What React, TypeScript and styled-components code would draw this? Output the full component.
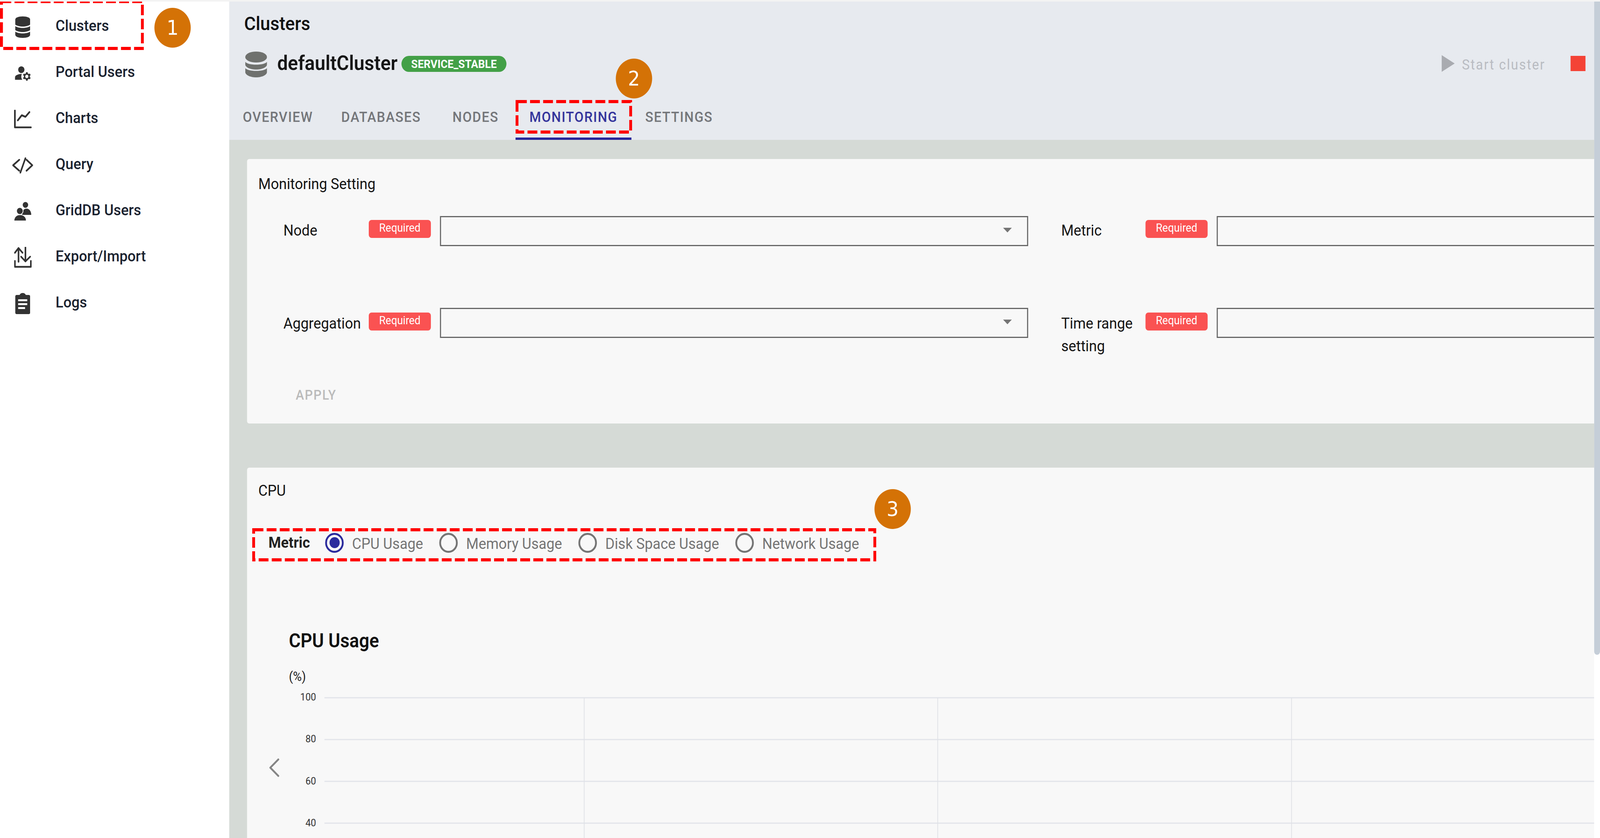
import React from "react";
import styled, { createGlobalStyle } from "styled-components";
import { MdManageAccounts } from "react-icons/md";

const DESIGN_WIDTH = 4404;

const GlobalStyle = createGlobalStyle`
  html, body { margin: 0; padding: 0; background: #fff; overflow: hidden; }
  body { font-family: Roboto, "Liberation Sans", sans-serif; }
  * { box-sizing: border-box; }
`;

const Viewport = styled.div`
  width: 100vw;
  height: 100vh;
  overflow: hidden;
`;

const Shell = styled.div`
  position: relative;
  width: ${DESIGN_WIDTH}px;
  height: 2145px;
  display: flex;
  overflow: hidden;
  border-top: 4px solid #f3f3f3;
  background: #fff;
  transform-origin: 0 0;
`;

const Sidebar = styled.nav`
  width: 631px;
  flex-shrink: 0;
  padding-top: 2px;
  background: #fff;
`;

const NavRow = styled.div`
  height: 118px;
  display: flex;
  align-items: center;
  color: #1b2330;
  font-size: 39.5px;
  font-weight: 500;
`;

const NavIcon = styled.span`
  width: 125px;
  margin-right: 28px;
  padding-top: 8px;
  display: flex;
  justify-content: center;
  align-items: center;
  color: #333;
`;

const Main = styled.div`
  width: 3757px;
  flex-shrink: 0;
  display: flex;
  flex-direction: column;
  overflow: hidden;
  background: #d5dad6;
`;

const Header = styled.header`
  height: 354px;
  flex-shrink: 0;
  background: #e7eaef;
  display: flex;
  flex-direction: column;
`;

const PageTitle = styled.h1`
  height: 112px;
  margin: 0;
  padding-left: 41px;
  display: flex;
  align-items: center;
  font-size: 49px;
  font-weight: 500;
  color: #111;
`;

const ClusterRow = styled.div`
  height: 84px;
  padding-left: 44px;
  display: flex;
  align-items: center;
  white-space: nowrap;
`;

const ClusterGlyph = styled.span`
  display: flex;
  margin-top: 14px;
`;

const ClusterName = styled.span`
  width: 342px;
  margin-left: 28px;
  padding-top: 7px;
  font-size: 52px;
  font-weight: 600;
  color: #161616;
`;

const StatusBadge = styled.span`
  width: 289px;
  height: 41px;
  margin-top: 11px;
  border-radius: 21px;
  background: #43a047;
  color: #fff;
  font-size: 29.4px;
  font-weight: 700;
  display: flex;
  align-items: center;
  justify-content: center;
`;

const Actions = styled.div`
  margin-left: auto;
  width: 420px;
  flex-shrink: 0;
  padding-top: 8px;
  display: flex;
  align-items: center;
`;

const ActionLabel = styled.span<{ $disabled?: boolean }>`
  font-size: 36px;
  letter-spacing: 2.6px;
  padding-top: 8px;
  color: ${(p) => (p.$disabled ? "#b9bcc2" : "#111")};
`;

const PlayIcon = styled.svg`
  width: 36px;
  height: 43px;
  margin-right: 20px;
  flex-shrink: 0;
`;

const StopSquare = styled.span`
  width: 41px;
  height: 39px;
  margin: 0 24px 0 70px;
  flex-shrink: 0;
  background: #f44336;
`;

const TabBar = styled.div`
  margin-top: 42px;
  display: flex;
`;

const Tab = styled.div<{ $active?: boolean; $width: number }>`
  width: ${(p) => p.$width}px;
  height: 116px;
  padding-top: 4px;
  display: flex;
  align-items: center;
  justify-content: center;
  border-bottom: 6px solid ${(p) => (p.$active ? "#26269a" : "transparent")};
  font-size: 36.5px;
  font-weight: 500;
  letter-spacing: 1.9px;
  color: ${(p) => (p.$active ? "#34349c" : "#74767a")};
`;

const Body = styled.div`
  flex: 1;
  min-height: 0;
  padding: 49px 0 0 49px;
  display: flex;
  flex-direction: column;
  gap: 113px;
`;

const Card = styled.section<{ $fixed?: boolean }>`
  flex-shrink: 0;
  background: #f8f8f8;
  border-radius: 6px 0 0 6px;
  overflow: hidden;
  height: ${(p) => (p.$fixed ? "677px" : "auto")};
`;

const CardTitle = styled.h2<{ $top: number }>`
  margin: 0;
  padding-top: ${(p) => p.$top}px;
  padding-left: 31px;
  line-height: 58px;
  font-size: 39.3px;
  font-weight: 400;
  color: #141414;
`;

const FormGrid = styled.div`
  margin-top: 53px;
  padding-left: 100px;
  display: grid;
  grid-template-columns: 2050px 1fr;
  grid-template-rows: 235px 165px;
  column-gap: 91px;
`;

const Field = styled.div<{ $labelWidth: number }>`
  display: grid;
  grid-template-columns: ${(p) => p.$labelWidth}px 172px 1fr;
  align-items: start;
`;

const FieldLabel = styled.div<{ $top: number }>`
  padding-top: ${(p) => p.$top}px;
  line-height: 58px;
  font-size: 39.3px;
  color: #141414;
`;

const RequiredBadge = styled.span<{ $top: number }>`
  margin-top: ${(p) => p.$top}px;
  height: 46px;
  width: 171px;
  padding-bottom: 6px;
  border-radius: 8px;
  background: #fa5252;
  color: #fff;
  font-size: 29px;
  display: flex;
  align-items: center;
  justify-content: center;
`;

const SelectBox = styled.div<{ $open?: boolean }>`
  height: 77px;
  margin-left: 24px;
  margin-right: ${(p) => (p.$open ? "-10px" : "0")};
  border: 3px solid #666;
  padding-right: 42px;
  padding-bottom: 6px;
  display: flex;
  align-items: center;
  justify-content: flex-end;
`;

const SelectArrow = styled.span`
  width: 0;
  height: 0;
  border-left: 12.5px solid transparent;
  border-right: 12.5px solid transparent;
  border-top: 12px solid #757575;
`;

const ApplyButton = styled.div`
  margin-left: 134px;
  height: 116px;
  display: flex;
  align-items: center;
  font-size: 34.5px;
  font-weight: 500;
  letter-spacing: 2px;
  color: #bbb;
`;

const MetricRow = styled.div`
  margin-top: 65px;
  height: 78px;
  padding-left: 59px;
  display: flex;
  align-items: center;
`;

const MetricLabel = styled.span`
  width: 156px;
  font-size: 39.3px;
  font-weight: 700;
  color: #222;
`;

const RadioDot = styled.span<{ $checked?: boolean }>`
  width: 51px;
  height: 51px;
  flex-shrink: 0;
  border-radius: 50%;
  border: 5px solid ${(p) => (p.$checked ? "#2b2b9d" : "#757575")};
  display: flex;
  align-items: center;
  justify-content: center;
  &::after {
    content: "";
    width: 28px;
    height: 28px;
    border-radius: 50%;
    background: ${(p) => (p.$checked ? "#2b2b9d" : "transparent")};
  }
`;

const RadioText = styled.span<{ $width?: number }>`
  width: ${(p) => (p.$width ? `${p.$width}px` : "auto")};
  margin-left: 23px;
  padding-top: 6px;
  font-size: 39.3px;
  color: #757575;
  white-space: nowrap;
`;

const ChartTitle = styled.h3`
  margin: 177px 0 0 115px;
  height: 70px;
  display: flex;
  align-items: center;
  font-size: 49.5px;
  font-weight: 600;
  color: #111;
`;

const ChartUnit = styled.div`
  margin: 31px 0 0 115px;
  height: 50px;
  display: flex;
  align-items: center;
  font-size: 33px;
  color: #222;
`;

const ChartFrame = styled.div`
  position: relative;
  height: 400px;
`;

const ChartSvg = styled.svg`
  display: block;
  width: 100%;
  height: 400px;
`;

const TickLabel = styled.text`
  font-family: Roboto, sans-serif;
  font-size: 26px;
  fill: #333;
  text-anchor: end;
  dominant-baseline: central;
`;

const PrevButton = styled.svg`
  position: absolute;
  left: 59px;
  top: 185px;
  width: 31px;
  height: 48px;
`;

const ScrollTrack = styled.div`
  width: 16px;
  flex-shrink: 0;
  background: #fff;
`;

const ScrollThumb = styled.div`
  height: 1672px;
  background: #c5ced8;
  border-radius: 0 0 8px 8px;
`;

const DashedBox = styled.svg<{ $x: number; $y: number; $w: number; $h: number }>`
  position: absolute;
  left: ${(p) => p.$x}px;
  top: ${(p) => p.$y}px;
  width: ${(p) => p.$w}px;
  height: ${(p) => p.$h}px;
  z-index: 5;
`;

const StepCircle = styled.div<{ $x: number; $y: number }>`
  position: absolute;
  left: ${(p) => p.$x - 50}px;
  top: ${(p) => p.$y - 51}px;
  width: 100px;
  height: 102px;
  border-radius: 50%;
  background: #d47206;
  color: #fff;
  font-family: "DejaVu Sans", sans-serif;
  font-size: 52px;
  display: flex;
  align-items: center;
  justify-content: center;
  z-index: 6;
`;

const Annotation = ({ x, y, w, h }: { x: number; y: number; w: number; h: number }) => (
  <DashedBox $x={x} $y={y} $w={w} $h={h} viewBox={`0 0 ${w} ${h}`}>
    <rect x={4} y={4} width={w - 8} height={h - 8} fill="none" stroke="#ff0000" strokeWidth={8} strokeDasharray="27 9" />
  </DashedBox>
);

const DbSmall = () => (
  <svg width={41} height={55} viewBox="0 0 41 55" fill="currentColor">
    <path d="M0 8C0 3 9 0 20.5 0S41 3 41 8V21C36 24.5 28 26 20.5 26S5 24.5 0 21Z" />
    <path d="M0 25C5 28 13 29.5 20.5 29.5S36 28 41 25V35C36 38.5 28 40 20.5 40S5 38.5 0 35Z" />
    <path d="M0 39C5 42 13 43.5 20.5 43.5S36 42 41 39V47C41 52 32 55 20.5 55S0 52 0 47Z" />
  </svg>
);

const DbLarge = () => (
  <svg width={60} height={66} viewBox="0 0 60 66" fill="#6f716e">
    <ellipse cx={30} cy={14} rx={30} ry={14} />
    <path d="M0 26C6 36 54 36 60 26V33C60 40 46 46 30 46S0 40 0 33Z" />
    <path d="M0 42C6 52 54 52 60 42V52C60 60 46 66 30 66S0 60 0 52Z" />
  </svg>
);

const ChartsIcon = () => (
  <svg width={49} height={49} viewBox="0 0 49 49" fill="none" stroke="currentColor" strokeWidth={4.6} strokeLinecap="round" strokeLinejoin="round">
    <path d="M3 2V45H47" />
    <path d="M11 27L22 14L32 18L43 6" />
  </svg>
);

const QueryIcon = () => (
  <svg width={57} height={41} viewBox="0 0 57 41" fill="none" stroke="currentColor" strokeWidth={4.4} strokeLinecap="round" strokeLinejoin="miter">
    <path d="M19 6L2 20L19 34" />
    <path d="M36 2L22 39" />
    <path d="M39 6L55 20L39 34" />
  </svg>
);

const UsersIcon = () => (
  <svg width={47} height={49} viewBox="0 0 47 49" fill="currentColor">
    <circle cx={31} cy={7.5} r={7.5} />
    <path d="M22 33C22 22 27 17 34 17C42 17 47 24 47 33Z" />
    <circle cx={15.5} cy={23} r={9} stroke="#fff" strokeWidth={2} />
    <path d="M0 48C0 39 7 33 16 33C26 33 33 39 33 48Z" stroke="#fff" strokeWidth={1} />
  </svg>
);

const TransferIcon = () => (
  <svg width={48} height={54} viewBox="0 0 48 54" fill="none" stroke="currentColor" strokeWidth={4.4} strokeLinecap="round" strokeLinejoin="round">
    <path d="M12 3V38" />
    <path d="M2 15L12 3L23 15" />
    <path d="M31 1V37" />
    <path d="M19 25L31 37L44 25" />
    <path d="M2 36V51H46V36" />
  </svg>
);

const LogsIcon = () => (
  <svg width={41} height={54} viewBox="0 0 41 54">
    <path fill="currentColor" d="M4 5H12C13 2 16 0 20.5 0S28 2 29 5H37A4 4 0 0 1 41 9V50A4 4 0 0 1 37 54H4A4 4 0 0 1 0 50V9A4 4 0 0 1 4 5Z" />
    <path fill="#fff" d="M8 16H33V21H8ZM8 26H33V31H8ZM8 36H27V41H8Z" />
  </svg>
);

const navItems: { label: string; icon: React.ReactNode }[] = [
  { label: "Clusters", icon: <DbSmall /> },
  { label: "Portal Users", icon: <MdManageAccounts size={52} /> },
  { label: "Charts", icon: <ChartsIcon /> },
  { label: "Query", icon: <QueryIcon /> },
  { label: "GridDB Users", icon: <UsersIcon /> },
  { label: "Export/Import", icon: <TransferIcon /> },
  { label: "Logs", icon: <LogsIcon /> },
];

const tabs = [
  { label: "OVERVIEW", width: 268 },
  { label: "DATABASES", width: 300 },
  { label: "NODES", width: 220 },
  { label: "MONITORING", width: 319, active: true },
  { label: "SETTINGS", width: 262 },
];

const radios = [
  { label: "CPU Usage", checked: true, width: 240 },
  { label: "Memory Usage", width: 309 },
  { label: "Disk Space Usage", width: 358 },
  { label: "Network Usage" },
];

const gridYs = [30, 137, 244, 351];
const gridXs = [928, 1901, 2875];
const ticks = [
  { v: "100", y: 28 },
  { v: "80", y: 135 },
  { v: "60", y: 243 },
  { v: "40", y: 350 },
];

export default function App() {
  // The design is 4404px wide; squeeze it horizontally into whatever window it gets.
  const fit = Math.min(1, window.innerWidth / DESIGN_WIDTH);
  return (
    <>
      <GlobalStyle />
      <Viewport>
        <Shell style={{ transform: `scaleX(${fit})` }}>
          <Sidebar>
            {navItems.map((n) => (
              <NavRow key={n.label}>
                <NavIcon>{n.icon}</NavIcon>
                {n.label}
              </NavRow>
            ))}
          </Sidebar>
          <Main>
            <Header>
              <PageTitle>Clusters</PageTitle>
              <ClusterRow>
                <ClusterGlyph><DbLarge /></ClusterGlyph>
                <ClusterName>defaultCluster</ClusterName>
                <StatusBadge>SERVICE_STABLE</StatusBadge>
                <Actions>
                  <PlayIcon viewBox="0 0 36 43">
                    <path d="M0 0L36 21.5L0 43Z" fill="#a9abb0" />
                  </PlayIcon>
                  <ActionLabel $disabled>Start cluster</ActionLabel>
                  <StopSquare />
                  <ActionLabel>S</ActionLabel>
                </Actions>
              </ClusterRow>
              <TabBar>
                {tabs.map((t) => (
                  <Tab key={t.label} $active={t.active} $width={t.width}>
                    {t.label}
                  </Tab>
                ))}
              </TabBar>
            </Header>
            <Body>
              <Card $fixed>
                <CardTitle $top={35}>Monitoring Setting</CardTitle>
                <FormGrid>
                  <Field $labelWidth={235}>
                    <FieldLabel $top={8}>Node</FieldLabel>
                    <RequiredBadge $top={10}>Required</RequiredBadge>
                    <SelectBox><SelectArrow /></SelectBox>
                  </Field>
                  <Field $labelWidth={232}>
                    <FieldLabel $top={8}>Metric</FieldLabel>
                    <RequiredBadge $top={10}>Required</RequiredBadge>
                    <SelectBox $open />
                  </Field>
                  <Field $labelWidth={235}>
                    <FieldLabel $top={11}>Aggregation</FieldLabel>
                    <RequiredBadge $top={12}>Required</RequiredBadge>
                    <SelectBox><SelectArrow /></SelectBox>
                  </Field>
                  <Field $labelWidth={232}>
                    <FieldLabel $top={11}>Time range setting</FieldLabel>
                    <RequiredBadge $top={12}>Required</RequiredBadge>
                    <SelectBox $open />
                  </Field>
                </FormGrid>
                <ApplyButton>APPLY</ApplyButton>
              </Card>
              <Card>
                <CardTitle $top={30}>CPU</CardTitle>
                <MetricRow>
                  <MetricLabel>Metric</MetricLabel>
                  {radios.map((r) => (
                    <React.Fragment key={r.label}>
                      <RadioDot $checked={r.checked} />
                      <RadioText $width={r.width}>{r.label}</RadioText>
                    </React.Fragment>
                  ))}
                </MetricRow>
                <ChartTitle>CPU Usage</ChartTitle>
                <ChartUnit>(%)</ChartUnit>
                <ChartFrame>
                  <ChartSvg viewBox="0 0 3708 400" preserveAspectRatio="xMinYMin slice">
                    {gridYs.map((y) => (
                      <line key={y} x1={213} x2={3708} y1={y} y2={y} stroke="#e2e4ea" strokeWidth={3} />
                    ))}
                    {gridXs.map((x) => (
                      <line key={x} x1={x} x2={x} y1={30} y2={400} stroke="#dfe1e6" strokeWidth={2} />
                    ))}
                    {ticks.map((t) => (
                      <TickLabel key={t.v} x={190} y={t.y}>{t.v}</TickLabel>
                    ))}
                  </ChartSvg>
                  <PrevButton viewBox="0 0 31 48" fill="none" stroke="#858585" strokeWidth={5} strokeLinecap="round" strokeLinejoin="round">
                    <path d="M27 3L5 24L27 45" />
                  </PrevButton>
                </ChartFrame>
              </Card>
            </Body>
          </Main>
          <ScrollTrack><ScrollThumb /></ScrollTrack>

          <Annotation x={0} y={-4} w={396} h={128} />
          <Annotation x={1419} y={252} w={321} h={86} />
          <Annotation x={694} y={1348} w={1718} h={85} />
          <StepCircle $x={475} $y={67}>1</StepCircle>
          <StepCircle $x={1745} $y={197}>2</StepCircle>
          <StepCircle $x={2457} $y={1299}>3</StepCircle>
        </Shell>
      </Viewport>
    </>
  );
}
